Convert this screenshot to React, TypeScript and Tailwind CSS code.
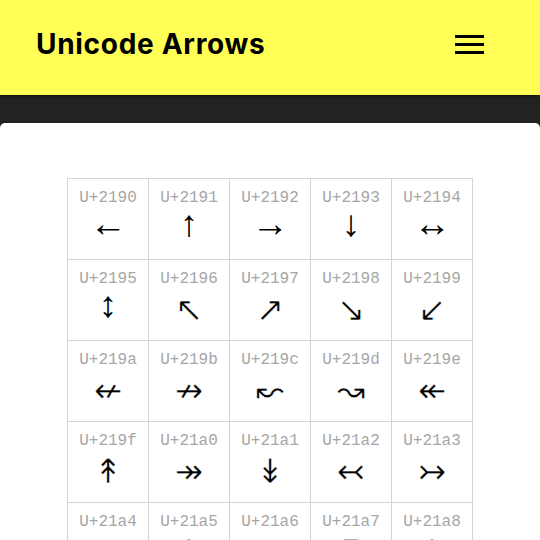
const codes: number[] = []
for (let c = 0x2190; c <= 0x21b7; c++) codes.push(c)

// the first six arrows come out thin in Liberation Sans, the rest need DejaVu
const isBasic = (c: number) => c <= 0x2195

export default function App() {
  return (
    <div className="min-h-screen bg-[#222222]">
      <header className="flex h-[95px] items-center justify-between bg-[#ffff55] pb-[7px] pl-9 pr-[56px] shadow-[0_1px_2px_rgba(0,0,0,0.5)]">
        <h1 className="font-['Inter',sans-serif] text-[28px] font-bold tracking-[0.7px] text-black">
          Unicode Arrows
        </h1>
        <button className="flex flex-col gap-[5px]">
          <span className="block h-[3px] w-[29px] bg-black"></span>
          <span className="block h-[3px] w-[29px] bg-black"></span>
          <span className="block h-[3px] w-[29px] bg-black"></span>
        </button>
      </header>

      <main className="mt-[28px] rounded-t-[5px] bg-white pt-[55px] pb-10">
        <div className="mx-auto grid w-[406px] grid-cols-[repeat(5,80px)] gap-px bg-[#d4d4d4] p-px">
          {codes.map((c) => (
            <div key={c} className="flex h-[80px] flex-col items-center bg-white pt-[9px]">
              <span className="font-['Liberation_Mono',monospace] text-[16px] leading-[20px] text-[#a6a6a6]">
                U+{c.toString(16)}
              </span>
              {isBasic(c) ? (
                <span className="font-['Liberation_Sans',sans-serif] text-[37px] leading-[32px] text-black">
                  {String.fromCharCode(c)}
                </span>
              ) : (
                <span className="font-['DejaVu_Sans',sans-serif] text-[34px] leading-[40px] text-black [-webkit-text-stroke:0.6px_white]">
                  {String.fromCharCode(c)}
                </span>
              )}
            </div>
          ))}
        </div>
      </main>
    </div>
  )
}
